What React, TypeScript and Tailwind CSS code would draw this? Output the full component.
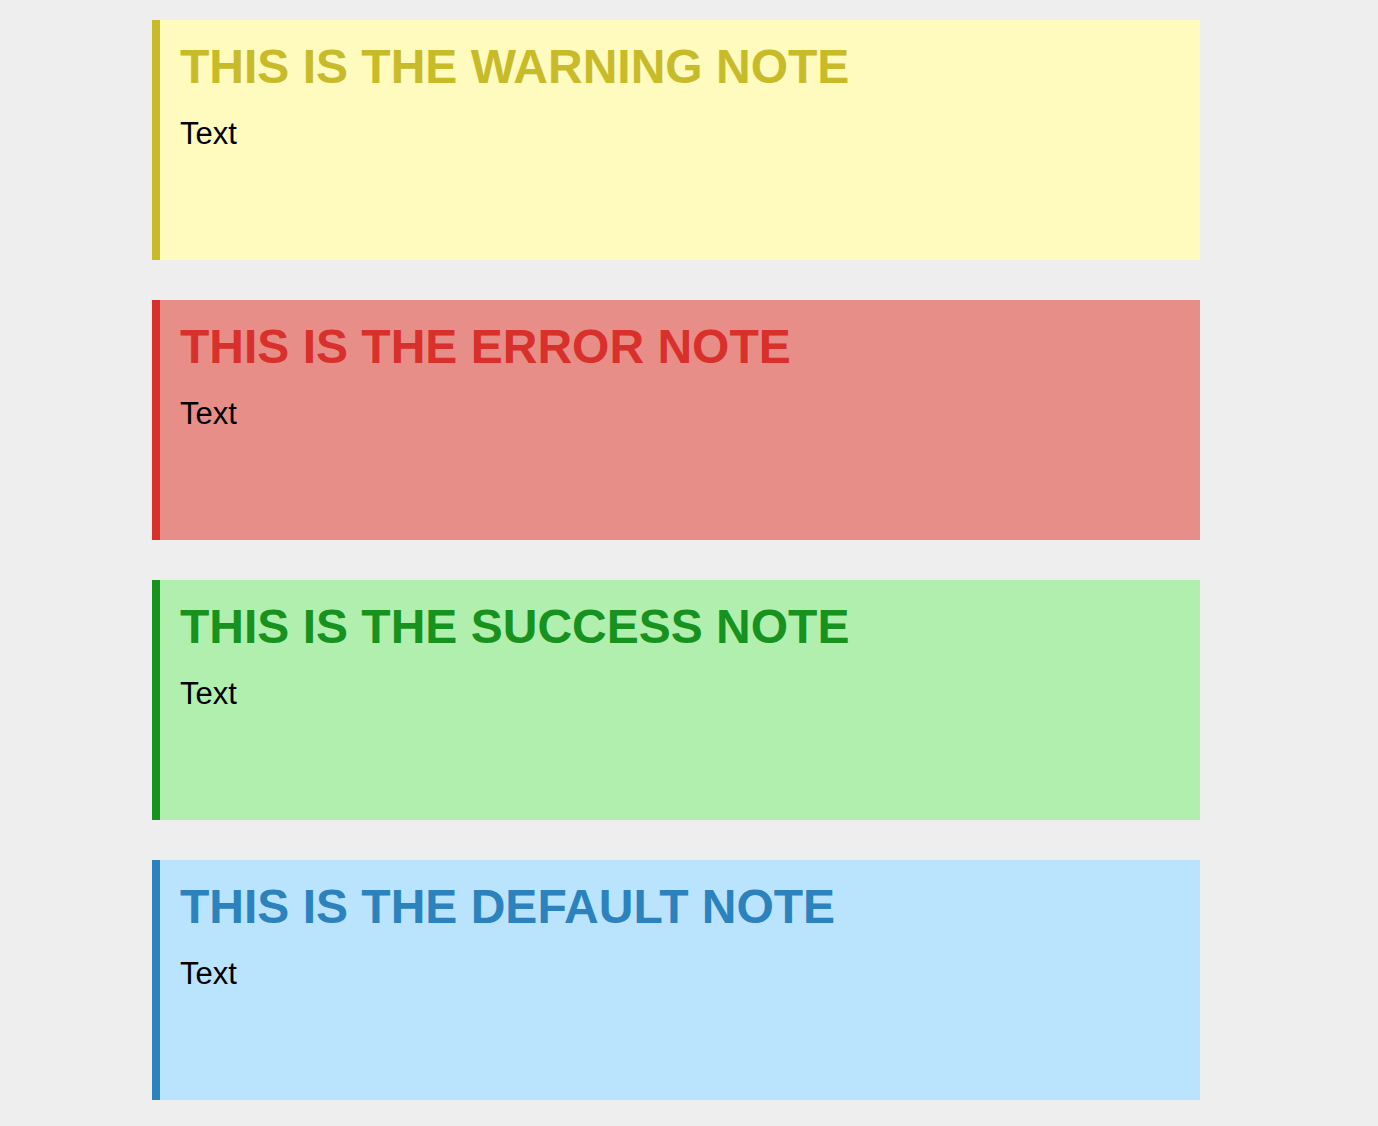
const notes = [
  {
    title: "THIS IS THE WARNING NOTE",
    box: "bg-[#fffabe] border-[#c8bb29]",
    head: "text-[#c8bb29]",
  },
  {
    title: "THIS IS THE ERROR NOTE",
    box: "bg-[#e88e88] border-[#d8302b]",
    head: "text-[#d8302b]",
  },
  {
    title: "THIS IS THE SUCCESS NOTE",
    box: "bg-[#b0efae] border-[#17921e]",
    head: "text-[#17921e]",
  },
  {
    title: "THIS IS THE DEFAULT NOTE",
    box: "bg-[#bae4fd] border-[#2b82bc]",
    head: "text-[#2b82bc]",
  },
];

export default function App() {
  return (
    <div className="min-h-[1126px] bg-[#eeeeee] pt-5 font-['Liberation_Sans',Arial,sans-serif]">
      <div className="ml-[152px] flex w-[1048px] flex-col gap-10">
        {notes.map((note) => (
          <div
            key={note.title}
            className={`h-[240px] border-l-8 pl-5 pt-[19px] ${note.box}`}
          >
            <h1 className={`text-[48px] font-bold leading-[55px] ${note.head}`}>
              {note.title}
            </h1>
            <p className="mt-[22px] text-[31px] leading-[36px] text-black">Text</p>
          </div>
        ))}
      </div>
    </div>
  );
}
